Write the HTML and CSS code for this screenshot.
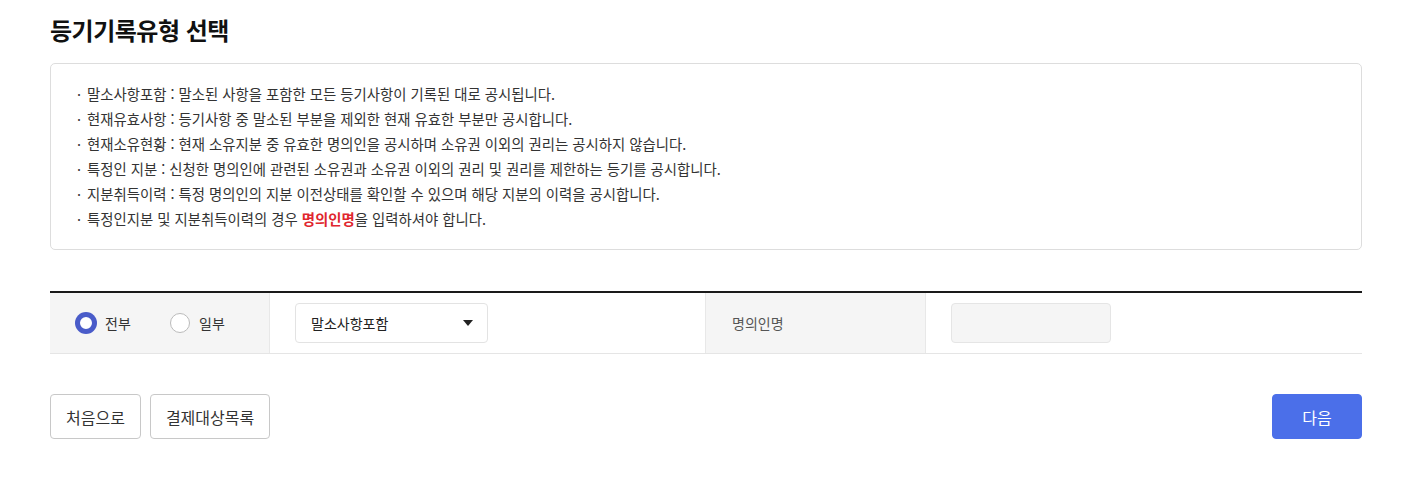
FILE: index.html
```html
<!DOCTYPE html>
<html lang="ko">
<head>
    <meta charset="UTF-8">
    <meta name="viewport" content="width=device-width, initial-scale=1.0">
    <title>등기기록유형 선택</title>
    <link rel="stylesheet" href="styles.css">
</head>
<body>
    <div class="page">
        <h1 class="title">등기기록유형 선택</h1>

        <div class="info-box">
            <ul class="info-list">
                <li>말소사항포함 : 말소된 사항을 포함한 모든 등기사항이 기록된 대로 공시됩니다.</li>
                <li>현재유효사항 : 등기사항 중 말소된 부분을 제외한 현재 유효한 부분만 공시합니다.</li>
                <li>현재소유현황 : 현재 소유지분 중 유효한 명의인을 공시하며 소유권 이외의 권리는 공시하지 않습니다.</li>
                <li>특정인 지분 : 신청한 명의인에 관련된 소유권과 소유권 이외의 권리 및 권리를 제한하는 등기를 공시합니다.</li>
                <li>지분취득이력 : 특정 명의인의 지분 이전상태를 확인할 수 있으며 해당 지분의 이력을 공시합니다.</li>
                <li>특정인지분 및 지분취득이력의 경우 <strong class="point">명의인명</strong>을 입력하셔야 합니다.</li>
            </ul>
        </div>

        <div class="form-table">
            <div class="cell cell-head cell-radio">
                <label class="radio"><span class="radio-mark checked"></span>전부</label>
                <label class="radio"><span class="radio-mark"></span>일부</label>
            </div>
            <div class="cell cell-select">
                <div class="select-box">
                    <span>말소사항포함</span>
                    <span class="arrow"></span>
                </div>
            </div>
            <div class="cell cell-head cell-label">명의인명</div>
            <div class="cell cell-input">
                <div class="text-input"></div>
            </div>
        </div>

        <div class="btn-area">
            <div class="btn-group">
                <button class="btn">처음으로</button>
                <button class="btn">결제대상목록</button>
            </div>
            <button class="btn btn-primary">다음</button>
        </div>
    </div>
</body>
</html>
```

FILE: styles.css
```css
body {
    margin: 0;
    font-family: "Noto Sans CJK KR", "Noto Sans", sans-serif;
    color: #222;
    background: #fff;
}
.page {
    padding: 0 57px 0 50px;
}
.title {
    margin: 0;
    padding-top: 13px;
    font-size: 24px;
    font-weight: 700;
    line-height: 34px;
    letter-spacing: -0.5px;
    color: #111;
}
.info-box {
    margin-top: 16px;
    border: 1px solid #ddd;
    border-radius: 5px;
    padding: 17px 26px 18px;
}
.info-list {
    margin: 0;
    padding: 0;
    list-style: none;
}
.info-list li {
    position: relative;
    padding-left: 10px;
    font-size: 14.4px;
    line-height: 25px;
    color: #333;
}
.info-list li::before {
    content: "·";
    position: absolute;
    left: 0;
    top: 0;
}
.point {
    color: #e0262e;
    font-weight: 700;
}
.form-table {
    margin-top: 41px;
    border-top: 2px solid #1a1a1a;
    border-bottom: 1px solid #e5e5e5;
    display: grid;
    grid-template-columns: 220px 435px 221px 1fr;
    height: 60px;
}
.cell {
    display: flex;
    align-items: center;
}
.cell-head {
    background: #f5f5f5;
}
.cell-radio {
    padding-left: 25px;
    border-right: 1px solid #e8e8e8;
}
.radio {
    display: flex;
    align-items: center;
    font-size: 14px;
    color: #333;
    width: 95px;
}
.radio-mark {
    width: 18px;
    height: 18px;
    border: 1px solid #bbb;
    border-radius: 50%;
    background: #fff;
    margin-right: 9px;
}
.radio-mark.checked {
    width: 12px;
    height: 12px;
    border: 4px solid #4a5cc9;
    box-shadow: 0 0 0 1px #4a5cc9;
    margin-left: 1px;
    margin-right: 9px;
}
.cell-select {
    padding-left: 25px;
}
.select-box {
    width: 193px;
    height: 40px;
    box-sizing: border-box;
    border: 1px solid #e3e3e3;
    border-radius: 4px;
    display: flex;
    align-items: center;
    justify-content: space-between;
    padding: 0 14px 0 15px;
    font-size: 14px;
    color: #222;
}
.arrow {
    width: 0;
    height: 0;
    border-left: 5px solid transparent;
    border-right: 5px solid transparent;
    border-top: 6px solid #222;
}
.cell-label {
    padding-left: 26px;
    font-size: 14px;
    color: #555;
    border-left: 1px solid #e8e8e8;
    border-right: 1px solid #e8e8e8;
}
.cell-input {
    padding-left: 25px;
}
.text-input {
    width: 160px;
    height: 40px;
    box-sizing: border-box;
    border: 1px solid #e5e5e5;
    border-radius: 4px;
    background: #f5f5f5;
}
.btn-area {
    margin-top: 40px;
    display: flex;
    justify-content: space-between;
}
.btn-group {
    display: flex;
    gap: 9px;
}
.btn {
    height: 45px;
    padding: 0 15px;
    border: 1px solid #c8c8c8;
    border-radius: 4px;
    background: #fff;
    font-family: inherit;
    font-size: 16px;
    color: #333;
}
.btn-primary {
    width: 90px;
    border-color: #4b6fe9;
    background: #4b6fe9;
    color: #fff;
}
```
